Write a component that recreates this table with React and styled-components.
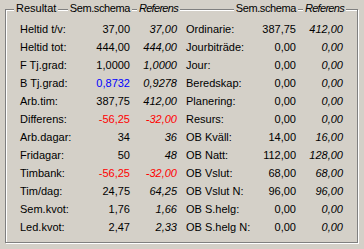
import React from 'react';
import styled, { createGlobalStyle } from 'styled-components';

const Global = createGlobalStyle`
  html, body { margin: 0; padding: 0; background: #d4d0c8; }
  body { font-family: "Liberation Sans", Arial, sans-serif; font-size: 11px; color: #000; }
`;

const Window = styled.div`
  width: 364px;
  height: 249px;
  box-sizing: border-box;
  padding: 9px 0 0 5px;
  background: #d4d0c8;
  overflow: hidden;
`;

const GroupBox = styled.div`
  width: 353px;
  height: 234px;
  box-sizing: border-box;
  border: 1px solid #808080;
  box-shadow: inset 1px 1px 0 #fff, 1px 1px 0 #fff;
  padding-left: 14px;
`;

const COLS = '60px 50px 47px 9px 60px 50px 47px';

const HeaderRow = styled.div`
  display: grid;
  grid-template-columns: ${COLS};
  height: 13px;
  line-height: 13px;
  margin-top: -8px;
  margin-bottom: 5px;
  align-items: center;
`;

const Legend = styled.span`
  justify-self: ${p => (p.$end ? 'end' : 'start')};
  background: #d4d0c8;
  padding: 0 2px;
  margin: ${p => (p.$end ? `0 ${p.$italic ? -3 : -2}px 0 0` : '0 0 0 -6px')};
  font-style: ${p => (p.$italic ? 'italic' : 'normal')};
  letter-spacing: ${p => (p.$italic ? '-0.7px' : p.$end ? '-0.4px' : '0')};
  white-space: nowrap;
`;

const Row = styled.div`
  display: grid;
  grid-template-columns: ${COLS};
  height: 18px;
  line-height: 18px;
  align-items: center;
`;

const Label = styled.span`
  white-space: nowrap;
`;

const Value = styled.span`
  text-align: right;
  white-space: nowrap;
  font-style: ${p => (p.$italic ? 'italic' : 'normal')};
  color: ${p => p.$color || '#000'};
`;

const Spacer = styled.span``;

const left = [
  ['Heltid t/v:', '37,00', '37,00'],
  ['Heltid tot:', '444,00', '444,00'],
  ['F Tj.grad:', '1,0000', '1,0000'],
  ['B Tj.grad:', '0,8732', '0,9278', '#0000ff', '#000'],
  ['Arb.tim:', '387,75', '412,00'],
  ['Differens:', '-56,25', '-32,00', '#ff0000', '#ff0000'],
  ['Arb.dagar:', '34', '36'],
  ['Fridagar:', '50', '48'],
  ['Timbank:', '-56,25', '-32,00', '#ff0000', '#ff0000'],
  ['Tim/dag:', '24,75', '64,25'],
  ['Sem.kvot:', '1,76', '1,66'],
  ['Led.kvot:', '2,47', '2,33'],
];

const right = [
  ['Ordinarie:', '387,75', '412,00'],
  ['Jourbiträde:', '0,00', '0,00'],
  ['Jour:', '0,00', '0,00'],
  ['Beredskap:', '0,00', '0,00'],
  ['Planering:', '0,00', '0,00'],
  ['Resurs:', '0,00', '0,00'],
  ['OB Kväll:', '14,00', '16,00'],
  ['OB Natt:', '112,00', '128,00'],
  ['OB Vslut:', '68,00', '68,00'],
  ['OB Vslut N:', '96,00', '96,00'],
  ['OB S.helg:', '0,00', '0,00'],
  ['OB S.helg N:', '0,00', '0,00'],
];

export default function App() {
  return (
    <>
      <Global />
      <Window>
        <GroupBox>
          <HeaderRow>
            <Legend>Resultat</Legend>
            <Legend $end>Sem.schema</Legend>
            <Legend $end $italic>Referens</Legend>
            <Spacer />
            <Spacer />
            <Legend $end>Sem.schema</Legend>
            <Legend $end $italic>Referens</Legend>
          </HeaderRow>
          {left.map((l, i) => {
            const r = right[i];
            return (
              <Row key={i}>
                <Label>{l[0]}</Label>
                <Value $color={l[3]}>{l[1]}</Value>
                <Value $italic $color={l[4]}>{l[2]}</Value>
                <Spacer />
                <Label>{r[0]}</Label>
                <Value>{r[1]}</Value>
                <Value $italic>{r[2]}</Value>
              </Row>
            );
          })}
        </GroupBox>
      </Window>
    </>
  );
}
